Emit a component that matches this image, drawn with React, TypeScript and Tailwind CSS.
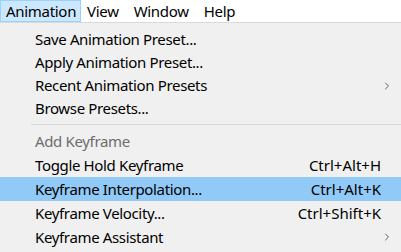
import { ChevronRight } from 'lucide-react';

type Item = {
  label: string;
  shortcut?: string;
  submenu?: boolean;
  disabled?: boolean;
  active?: boolean;
};

const topItems: Item[] = [
  { label: 'Save Animation Preset...' },
  { label: 'Apply Animation Preset...' },
  { label: 'Recent Animation Presets', submenu: true },
  { label: 'Browse Presets...' },
];

const keyItems: Item[] = [
  { label: 'Add Keyframe', disabled: true },
  { label: 'Toggle Hold Keyframe', shortcut: 'Ctrl+Alt+H' },
  { label: 'Keyframe Interpolation...', shortcut: 'Ctrl+Alt+K', active: true },
  { label: 'Keyframe Velocity...', shortcut: 'Ctrl+Shift+K' },
  { label: 'Keyframe Assistant', submenu: true },
];

function MenuRow({ item, height }: { item: Item; height: string }) {
  return (
    <div
      className={`flex items-center ${height} pl-[35px] pr-[20px] relative ${
        item.active ? 'bg-[#91c9f7]' : ''
      } ${item.disabled ? 'text-[#6d6d6d]' : 'text-black'}`}
    >
      <span className="flex-1 whitespace-nowrap tracking-[-0.35px]">{item.label}</span>
      {item.shortcut && <span className="whitespace-nowrap">{item.shortcut}</span>}
      {item.submenu && (
        <ChevronRight
          className="absolute right-[8px] top-1/2 -translate-y-1/2 h-[12px] w-[12px] text-[#333]"
          strokeWidth={1.5}
        />
      )}
    </div>
  );
}

export default function App() {
  return (
    <div
      className="h-screen w-full overflow-hidden bg-[#f0f0f0] text-[15px] leading-none"
      style={{ fontFamily: '"Noto Sans", "Open Sans", sans-serif' }}
    >
      <div className="flex h-[23px] items-stretch bg-white border-b border-[#d9d9d9] tracking-[-0.3px]">
        <div className="flex items-center px-[5px] w-[81px] bg-[#cce8ff] border border-[#99d1ff]">
          Animation
        </div>
        <div className="flex items-center pl-[6px] pr-[7px]">View</div>
        <div className="flex items-center pl-[8px] pr-[7px]">Window</div>
        <div className="flex items-center pl-[8px]">Help</div>
      </div>
      <div className="flex flex-col pt-[5px]">
        {topItems.map((item) => (
          <MenuRow key={item.label} item={item} height="h-[23px]" />
        ))}
        <div className="flex items-center h-[9px] pl-[31px]">
          <div className="h-px w-full bg-[#d7d7d7]" />
        </div>
        {keyItems.map((item) => (
          <MenuRow key={item.label} item={item} height="h-[24px]" />
        ))}
      </div>
    </div>
  );
}
